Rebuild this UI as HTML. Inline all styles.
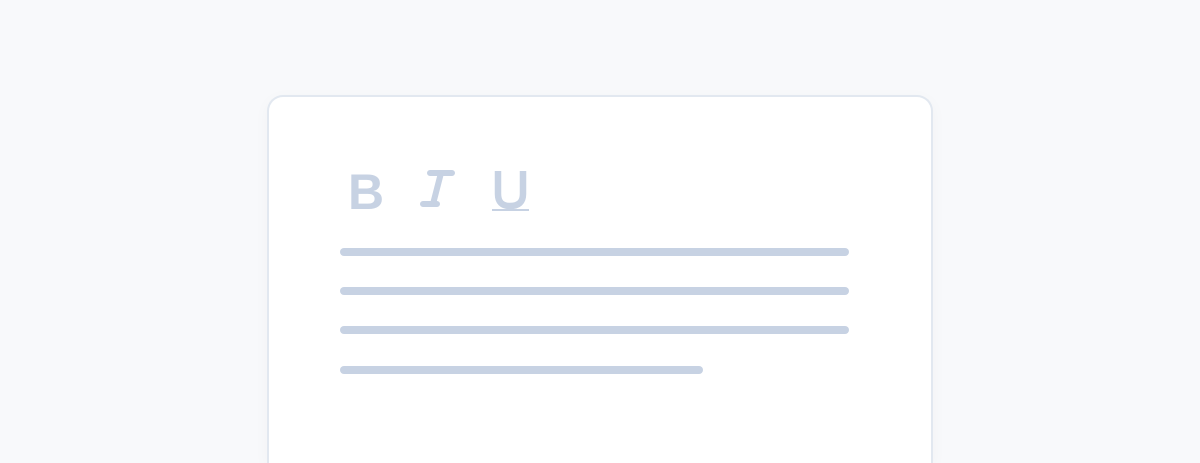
<!DOCTYPE html><html><head><style>
html,body{margin:0;width:1200px;height:463px;overflow:hidden}
body{background:#f8f9fb;position:relative;font-family:"Liberation Sans",sans-serif}
.card{position:absolute;left:267px;top:95px;width:662px;height:366px;background:#fff;border:2px solid #e2e8f0;border-bottom:none;border-radius:16px 16px 0 0;box-shadow:0 4px 16px rgba(0,0,0,.03)}
.l{position:absolute;left:340px;height:8px;border-radius:4px;background:#c7d2e3}
.t{position:absolute;color:#c7d2e3;font-weight:bold;font-size:50px;line-height:1}
</style></head><body>
<div class="card"></div>
<div class="t" style="left:348px;top:167px">B</div>
<svg style="position:absolute;left:415px;top:168px" width="45" height="42"><path d="M15 5H37M26 5L18 36M8 36H22" stroke="#c7d2e3" stroke-width="6" stroke-linecap="round" fill="none"/></svg>
<svg style="position:absolute;left:490px;top:168px" width="42" height="46"><path d="M8 3V26Q8 38 20 38Q33 38 33 26V3" stroke="#c7d2e3" stroke-width="6.5" fill="none"/><rect x="2" y="41" width="37" height="2" fill="#c7d2e3"/></svg>
<div class="l" style="top:248px;width:509px"></div>
<div class="l" style="top:287px;width:509px"></div>
<div class="l" style="top:326px;width:509px"></div>
<div class="l" style="top:366px;width:363px"></div>
</body></html>
